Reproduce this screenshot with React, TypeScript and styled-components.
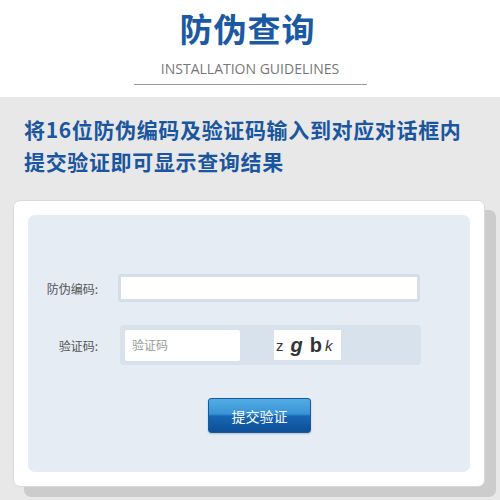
import React from "react";
import styled, { createGlobalStyle } from "styled-components";

const Global = createGlobalStyle`
  html, body { margin: 0; padding: 0; background: #e8e8e8; }
  body { font-family: "Noto Sans CJK SC", "Noto Sans", sans-serif; }
`;

const Page = styled.div`
  width: 500px;
  height: 500px;
  overflow: hidden;
  background: #e8e8e8;
`;

const Header = styled.header`
  height: 97px;
  background: #fff;
  display: flex;
  flex-direction: column;
  align-items: center;
  box-sizing: border-box;
  padding-top: 5px;
`;

const Title = styled.h1`
  margin: 0 5px 0 0;
  font-size: 33px;
  line-height: 46px;
  font-weight: 700;
  color: #1b5aa3;
  letter-spacing: 1px;
`;

const Subtitle = styled.div`
  margin-top: 7px;
  width: 233px;
  text-align: center;
  font-family: "Open Sans", "Noto Sans", sans-serif;
  font-size: 14px;
  line-height: 21px;
  color: #777;
  padding-bottom: 5px;
  border-bottom: 1px solid #9a9a9a;
`;

const Intro = styled.h2`
  margin: 0;
  padding: 16px 0 0 24px;
  font-size: 21px;
  line-height: 32px;
  font-weight: 700;
  color: #1a56a0;
  letter-spacing: 0.65px;
`;

const Card = styled.section`
  margin: 23px 0 0 13px;
  width: 472px;
  height: 287px;
  box-sizing: border-box;
  background: #fff;
  border: 1px solid #dadada;
  border-radius: 7px;
  box-shadow: 11px 10px 0 #cccccc;
  padding: 14px;
`;

const Panel = styled.div`
  height: 257px;
  background: #e5ecf4;
  border-radius: 7px;
  display: flex;
  flex-direction: column;
  padding-top: 59px;
  box-sizing: border-box;
`;

const Row = styled.div<{ $mt?: number }>`
  display: flex;
  align-items: center;
  margin-top: ${(p) => p.$mt ?? 0}px;
`;

const Label = styled.label`
  width: 70px;
  text-align: right;
  font-size: 12px;
  color: #555;
  margin-right: 20px;
`;

const CodeField = styled.div`
  width: 302px;
  height: 28px;
  box-sizing: border-box;
  border: 3px solid #d3dee9;
  border-radius: 3px;
  background: #fff;
`;

const CaptchaBox = styled.div`
  margin-left: 2px;
  width: 301px;
  height: 40px;
  box-sizing: border-box;
  background: #d8e2ec;
  border-radius: 4px;
  padding: 5px;
  display: flex;
  align-items: flex-start;
`;

const SmallInput = styled.div`
  width: 115px;
  height: 31px;
  background: #fff;
  border-radius: 2px;
  box-sizing: border-box;
  padding-left: 7px;
  font-size: 12px;
  line-height: 29px;
  color: #999;
`;

const Captcha = styled.div`
  margin-left: 34px;
  width: 67px;
  height: 30px;
  background: #fff;
  display: flex;
  align-items: center;
  padding-left: 2px;
  box-sizing: border-box;
  font-family: "Liberation Sans", Arial, sans-serif;
  color: #333;
`;

const Ch = styled.span<{ $size: number; $bold?: boolean; $italic?: boolean; $gap: number }>`
  font-size: ${(p) => p.$size}px;
  font-weight: ${(p) => (p.$bold ? 700 : 400)};
  font-style: ${(p) => (p.$italic ? "italic" : "normal")};
  margin-right: ${(p) => p.$gap}px;
`;

const ButtonRow = styled.div`
  display: flex;
  justify-content: center;
  margin-top: 33px;
  padding-left: 21px;
`;

const Button = styled.button`
  width: 103px;
  height: 35px;
  border: 1px solid #1a5a9c;
  border-radius: 3px;
  background: linear-gradient(to bottom, #52ace3 0%, #3a93d6 45%, #1766b3 52%, #0d4f98 100%);
  color: #fff;
  font-family: "Noto Sans CJK SC", sans-serif;
  font-size: 14px;
  padding: 0;
  box-shadow: 0 1px 2px rgba(0, 0, 0, 0.2);
`;

export default function App() {
  return (
    <Page>
      <Global />
      <Header>
        <Title>防伪查询</Title>
        <Subtitle>INSTALLATION GUIDELINES</Subtitle>
      </Header>
      <Intro>
        将16位防伪编码及验证码输入到对应对话框内
        <br />
        提交验证即可显示查询结果
      </Intro>
      <Card>
        <Panel>
          <Row>
            <Label>防伪编码:</Label>
            <CodeField />
          </Row>
          <Row $mt={23}>
            <Label>验证码:</Label>
            <CaptchaBox>
              <SmallInput>验证码</SmallInput>
              <Captcha>
                <Ch $size={15} $gap={7}>z</Ch>
                <Ch $size={20} $bold $italic $gap={7}>g</Ch>
                <Ch $size={20} $bold $gap={3}>b</Ch>
                <Ch $size={15} $italic $gap={0}>k</Ch>
              </Captcha>
            </CaptchaBox>
          </Row>
          <ButtonRow>
            <Button>提交验证</Button>
          </ButtonRow>
        </Panel>
      </Card>
    </Page>
  );
}
